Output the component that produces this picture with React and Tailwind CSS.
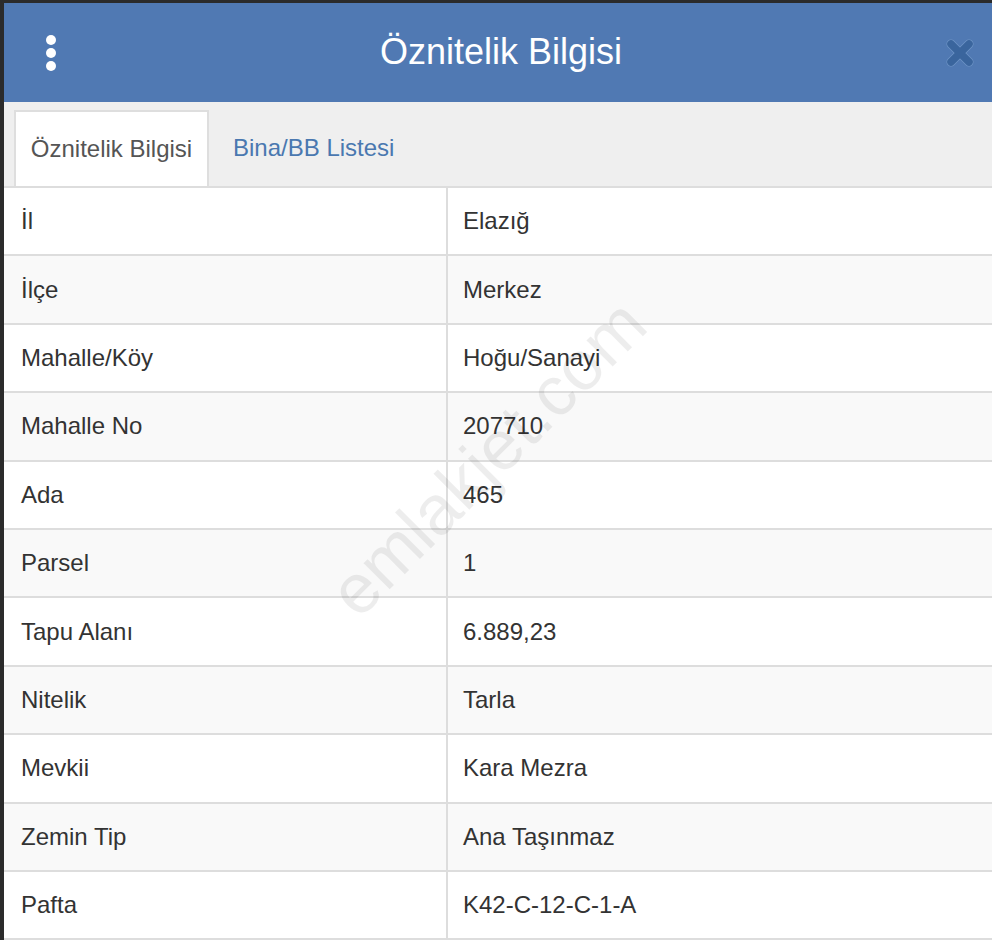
const rows = [
  ['İl', 'Elazığ'],
  ['İlçe', 'Merkez'],
  ['Mahalle/Köy', 'Hoğu/Sanayi'],
  ['Mahalle No', '207710'],
  ['Ada', '465'],
  ['Parsel', '1'],
  ['Tapu Alanı', '6.889,23'],
  ['Nitelik', 'Tarla'],
  ['Mevkii', 'Kara Mezra'],
  ['Zemin Tip', 'Ana Taşınmaz'],
  ['Pafta', 'K42-C-12-C-1-A'],
]

export default function App() {
  return (
    <div className="w-[992px] h-[940px] overflow-hidden bg-[#2b2b2b] pl-[4px] pt-[3px] font-[family-name:Liberation_Sans,Arial,sans-serif]">
      <div className="relative h-full bg-white">
        {/* header */}
        <div className="h-[99px] bg-[#5079b3] flex items-center px-[42px]">
          <div className="flex flex-col gap-[3px]">
            <span className="w-[10px] h-[10px] rounded-full bg-white" />
            <span className="w-[10px] h-[10px] rounded-full bg-white" />
            <span className="w-[10px] h-[10px] rounded-full bg-white" />
          </div>
          <h1 className="flex-1 text-center text-white text-[36px] leading-none pb-[2px]">
            Öznitelik Bilgisi
          </h1>
          <svg className="w-[28px] h-[28px] -mr-[24px]" viewBox="0 0 28 28">
            <path
              d="M5 5 L23 23 M23 5 L5 23"
              stroke="#6f95c6"
              strokeWidth="9"
              strokeLinecap="round"
            />
            <path
              d="M5 5 L23 23 M23 5 L5 23"
              stroke="#3a659d"
              strokeWidth="7.5"
              strokeLinecap="round"
            />
          </svg>
        </div>

        {/* tabs */}
        <div className="h-[84px] bg-[#efefef] flex items-end pl-[10px]">
          <div className="h-[76px] w-[195px] bg-white border-2 border-b-0 border-[#dedede] flex items-center justify-center text-[24px] text-[#555]">
            Öznitelik Bilgisi
          </div>
          <div className="h-[76px] px-[24px] flex items-center text-[24px] text-[#4a78b0]">
            Bina/BB Listesi
          </div>
        </div>

        {/* table */}
        <div className="border-t-2 border-[#dddddd]">
          {rows.map(([k, v], i) => (
            <div
              key={k}
              className={`grid grid-cols-[444px_1fr] h-[68.4px] border-b-2 border-[#dddddd] text-[24px] text-[#333] ${
                i % 2 === 1 ? 'bg-[#f9f9f9]' : 'bg-white'
              }`}
            >
              <div className="flex items-center pl-[17px] border-r-2 border-[#dddddd]">
                {k}
              </div>
              <div className="flex items-center pl-[15px]">{v}</div>
            </div>
          ))}
        </div>

        {/* watermark */}
        <div className="absolute left-[484px] top-[455px] -translate-x-1/2 -translate-y-1/2 -rotate-45 text-[70px] text-black/[0.07] whitespace-nowrap pointer-events-none select-none">
          emlakjet.com
        </div>
      </div>
    </div>
  )
}
